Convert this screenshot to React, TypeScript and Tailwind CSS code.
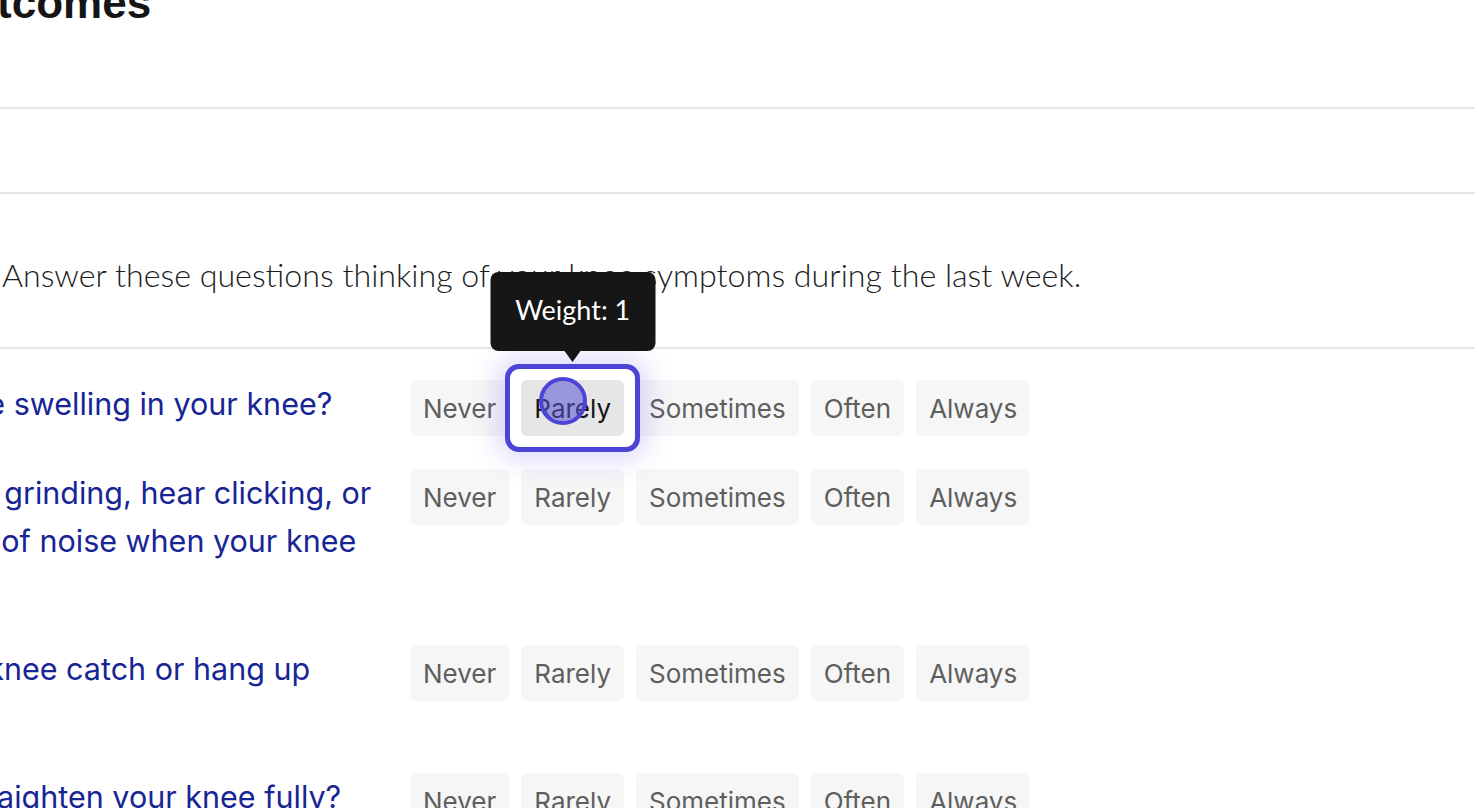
import React from "react";

const options = ["Never", "Rarely", "Sometimes", "Often", "Always"];

const questions: { lines: string[]; selected?: string }[] = [
  { lines: ["1. Do you have swelling in your knee?"], selected: "Rarely" },
  {
    lines: [
      "2. Do you feel grinding, hear clicking, or",
      "any other type of noise when your knee",
      "moves?",
    ],
  },
  { lines: ["3. Does your knee catch or hang up", "when moving?"] },
  { lines: ["4. Can you straighten your knee fully?"] },
  { lines: ["5. Can you bend your knee fully?"] },
];

function OptionButton({ label, selected }: { label: string; selected: boolean }) {
  if (selected) {
    return (
      <div className="relative">
        {/* tooltip */}
        <div className="absolute left-1/2 -translate-x-1/2 bottom-[74px] z-20 flex flex-col items-center">
          <div className="w-[165px] h-[79px] rounded-[8px] bg-[#161616] flex items-center justify-center text-white text-[27px] font-['Lato',sans-serif] pb-[2px]">
            Weight: 1
          </div>
          <div className="w-0 h-0 border-l-[8px] border-r-[8px] border-t-[11px] border-l-transparent border-r-transparent border-t-[#161616]" />
        </div>
        {/* focus ring */}
        <div className="absolute -inset-[16px] rounded-[14px] border-[5px] border-[#4b44d6] bg-white shadow-[0_0_26px_8px_rgba(99,90,240,0.22)] z-0" />
        <button className="relative z-10 h-[56px] px-[13px] pt-[2px] rounded-[6px] bg-[#e6e6e6] text-[#151515] text-[26px] font-['Inter',sans-serif] leading-none">
          {label}
        </button>
        {/* touch indicator */}
        <div className="absolute z-30 left-[18px] top-[-3px] w-[48px] h-[48px] rounded-full border-[4px] border-[#4b44d6] bg-[rgba(90,84,210,0.55)]" />
      </div>
    );
  }
  return (
    <button className="h-[56px] px-[13px] pt-[2px] rounded-[6px] bg-[#f6f6f6] text-[#5e5e5e] text-[26px] font-['Inter',sans-serif] leading-none">
      {label}
    </button>
  );
}

export default function App() {
  return (
    <div className="w-[1475px] h-[808px] overflow-hidden bg-white flex flex-col">
      {/* title section */}
      <div className="h-[107px] shrink-0 flex flex-col">
        <h1 className="-mt-[21px] -ml-[64px] h-[48px] text-[44px] leading-[48px] font-bold text-[#151515] font-['Liberation_Sans',sans-serif] whitespace-nowrap">
          Outcomes
        </h1>
      </div>
      <div className="h-[2px] shrink-0 bg-[#e6e6e6]" />
      <div className="h-[83px] shrink-0" />
      <div className="h-[2px] shrink-0 bg-[#e6e6e6]" />
      {/* description */}
      <div className="h-[153px] shrink-0 pt-[61px]">
        <p className="ml-[2px] text-[32.2px] leading-[40px] font-light text-[#1c1c1c] font-['Lato',sans-serif] whitespace-nowrap">
          Answer these questions thinking of your knee symptoms during the last week.
        </p>
      </div>
      <div className="h-[2px] shrink-0 bg-[#e6e6e6]" />
      {/* questions */}
      <div className="pt-[31px] flex flex-col gap-[32px]">
        {questions.map((q, i) => (
          <div key={i} className={`flex gap-[25px] -ml-[216px] ${i === 0 ? "mb-[1px]" : ""}`}>
            <div className="w-[601px] shrink-0 text-[30.5px] leading-[48px] text-[#172595] font-['Inter',sans-serif] whitespace-nowrap">
              {q.lines.map((l, j) => (
                <div key={j} className={j === 0 ? "pl-[12px]" : ""}>
                  {l}
                </div>
              ))}
            </div>
            <div className="flex gap-[12px] items-start">
              {options.map((o) => (
                <OptionButton key={o} label={o} selected={q.selected === o} />
              ))}
            </div>
          </div>
        ))}
      </div>
    </div>
  );
}
